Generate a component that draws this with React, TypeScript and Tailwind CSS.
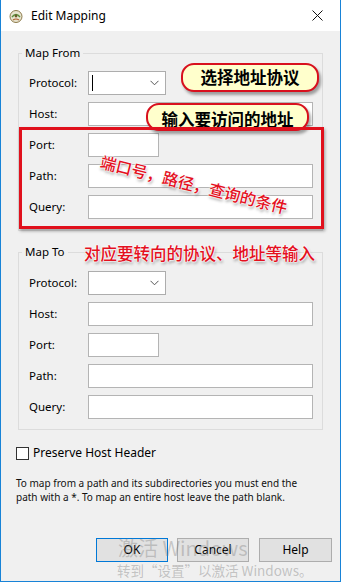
import React from "react";

function Row({ label, children }: { label: string; children: React.ReactNode }) {
  return (
    <div className="flex items-center h-[24px]">
      <span className="w-[59px] shrink-0">{label}</span>
      {children}
    </div>
  );
}

function TextBox({ w }: { w: string }) {
  return <div className={`h-[24px] bg-white border border-[#b4b4b4] ${w}`} />;
}

function Select({ caret }: { caret?: boolean }) {
  return (
    <div className="relative h-[24px] w-[78px] bg-white border border-[#adadad] flex items-center justify-end pr-[6px]">
      {caret && <div className="absolute left-[3px] top-[3px] w-[1px] h-[16px] bg-black" />}
      <svg width="9" height="6" viewBox="0 0 9 6">
        <path d="M0.5 0.8 L4.5 4.8 L8.5 0.8" fill="none" stroke="#555" strokeWidth="1" />
      </svg>
    </div>
  );
}

function Group({ title, first }: { title: string; first?: boolean }) {
  return (
    <fieldset className={`mx-[17px] border border-[#dcdcdc] ${first ? "mt-[14px] pb-[11px]" : "mt-[13px] pb-[10px]"}`}>
      <legend className="ml-[3px] px-[3px] leading-[16px]">{title}</legend>
      <div className={`pl-[10px] flex flex-col gap-[7px] ${first ? "pt-[10px]" : "pt-[11px]"}`}>
        <Row label="Protocol:">
          <Select caret={first} />
        </Row>
        <Row label="Host:">
          <TextBox w="w-[225px]" />
        </Row>
        <Row label="Port:">
          <TextBox w="w-[71px]" />
        </Row>
        <Row label="Path:">
          <TextBox w="w-[225px]" />
        </Row>
        <Row label="Query:">
          <TextBox w="w-[225px]" />
        </Row>
      </div>
    </fieldset>
  );
}

export default function App() {
  const glow =
    "[text-shadow:0_0_1px_#fff,0_0_2px_#fff,0_0_2px_#fff,0_0_3px_#fff,1px_2px_3px_rgba(0,0,0,0.45)]";
  return (
    <div className="relative w-[341px] h-[582px] overflow-hidden bg-[#f0f0f0] border-l border-r border-b border-[#1883d7] font-['Noto_Sans','Noto_Sans_CJK_SC',sans-serif] text-[11.5px] text-black">
      {/* Title bar */}
      <div className="h-[31px] bg-white flex items-center">
        <svg className="ml-[7px]" width="16" height="16" viewBox="0 0 16 16">
          <circle cx="8" cy="8.5" r="6" fill="#e8e4cf" stroke="#8c7a4a" strokeWidth="1" />
          <path d="M4 9 Q8 4 12 9" fill="none" stroke="#5a8f3a" strokeWidth="1.5" />
          <path d="M5 12 Q8 10 11 12" fill="none" stroke="#b06030" strokeWidth="1.2" />
          <circle cx="8" cy="8" r="1.4" fill="#6a5a2a" />
        </svg>
        <span className="ml-[7px] text-[12px]">Edit Mapping</span>
        <svg className="ml-auto mr-[17px]" width="11" height="11" viewBox="0 0 11 11">
          <path d="M0.5 0.5 L10.5 10.5 M10.5 0.5 L0.5 10.5" stroke="#111" strokeWidth="1" />
        </svg>
      </div>

      <Group title="Map From" first />
      <Group title="Map To" />

      <div className="mt-[15px] ml-[15px] flex items-center h-[16px]">
        <div className="w-[13px] h-[13px] bg-white border border-[#333]" />
        <span className="ml-[4px] text-[12px]">Preserve Host Header</span>
      </div>

      <div className="mt-[15px] ml-[15px] text-[10px] leading-[14px] text-[#111]">
        <div>To map from a path and its subdirectories you must end the</div>
        <div>path with a *. To map an entire host leave the path blank.</div>
      </div>

      <div className="mt-[34px] flex justify-end pr-[8px] text-[12px]">
        <div className="w-[72px] h-[24px] bg-[#e1e1e1] border border-[#0078d7] flex items-center justify-center">OK</div>
        <div className="ml-[9px] w-[72px] h-[24px] bg-[#e1e1e1] border border-[#adadad] flex items-center justify-center">Cancel</div>
        <div className="ml-[10px] w-[73px] h-[24px] bg-[#e1e1e1] border border-[#adadad] flex items-center justify-center">Help</div>
      </div>

      {/* Windows activation watermark */}
      <div className="absolute left-[117px] top-[535px] text-[20px] leading-[26px] text-[rgba(120,120,120,0.35)] font-['Noto_Sans_CJK_SC',sans-serif]">
        激活 Windows
      </div>
      <div className="absolute left-[116px] top-[561px] text-[13.5px] leading-[18px] text-[rgba(120,120,120,0.4)] font-['Noto_Sans_CJK_SC',sans-serif]">
        转到“设置”以激活 Windows。
      </div>

      {/* Annotations */}
      <div className="absolute left-[180px] top-[63px] w-[138px] h-[29px] rounded-[13px] border-2 border-[#d8101e] bg-[#ffffcc] shadow-[2px_3px_3px_rgba(0,0,0,0.35)] flex items-center justify-center font-['Noto_Sans_CJK_SC',sans-serif] font-bold text-[16.5px] leading-none">
        选择地址协议
      </div>
      <div className="absolute left-[145px] top-[103px] w-[163px] h-[28px] rounded-[13px] border-2 border-[#d8101e] bg-[#ffffcc] shadow-[2px_3px_3px_rgba(0,0,0,0.35)] flex items-center justify-center pt-[5px] font-['Noto_Sans_CJK_SC',sans-serif] font-bold text-[16.5px] leading-none">
        输入要访问的地址
      </div>
      <div className="absolute left-[18px] top-[127px] w-[305px] h-[102px] border-[3px] border-[#e0101c] shadow-[1px_2px_3px_rgba(0,0,0,0.35)]" />
      <div
        className={`absolute left-[102px] top-[152px] origin-top-left rotate-[14deg] whitespace-nowrap text-[16px] leading-[18px] text-[#e4101e] font-medium font-['Noto_Sans_CJK_SC',sans-serif] ${glow}`}
      >
        端口号，路径，查询的条件
      </div>
      <div
        className={`absolute left-[83px] top-[243px] whitespace-nowrap text-[16.5px] leading-[20px] text-[#e4101e] font-medium font-['Noto_Sans_CJK_SC',sans-serif] ${glow}`}
      >
        对应要转向的协议、地址等输入
      </div>
    </div>
  );
}
